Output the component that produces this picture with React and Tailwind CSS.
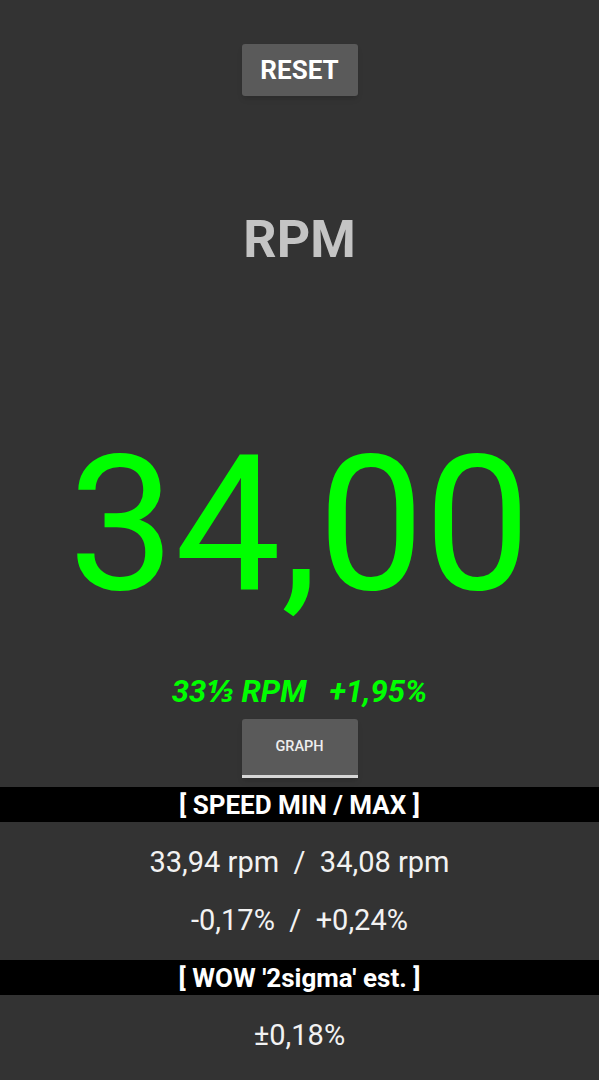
import React from "react";

const font = { fontFamily: "Roboto, 'Noto Sans', sans-serif" };

const SectionBar = ({ title }) => (
  <div className="w-full h-[35px] bg-black flex items-center justify-center">
    <span className="text-[26px] font-bold text-white leading-none whitespace-pre">{title}</span>
  </div>
);

const App = () => {
  return (
    <div className="min-h-screen w-full bg-[#333333] flex flex-col items-center" style={font}>
      <button className="mt-[44px] h-[52px] w-[116px] rounded-[3px] bg-[#5a5a5a] text-white text-[26px] font-bold shadow-md">
        RESET
      </button>

      <div className="mt-[118px] h-[52px] text-[52px] leading-none font-bold text-[#c4c4c4]">RPM</div>

      <div className="mt-[164px] h-[189px] text-[189px] leading-none text-[#00ff00]">34,00</div>

      <div className="mt-[57px] h-[31px] text-[31px] leading-none font-bold italic text-[#00ff00] whitespace-pre">
        33⅓ RPM   +1,95%
      </div>

      <button className="mt-[12px] h-[59px] w-[116px] rounded-t-[3px] bg-[#5a5a5a] border-b-[3px] border-[#d6d6d6] text-[14.5px] font-medium text-[#eeeeee] shadow-md">
        GRAPH
      </button>

      <div className="mt-[9px] w-full">
        <SectionBar title="[ SPEED MIN / MAX ]" />
      </div>

      <div className="mt-[26px] h-[29px] text-[29px] leading-none text-[#f2f2f2] whitespace-pre">33,94 rpm  /  34,08 rpm</div>
      <div className="mt-[29px] h-[29px] text-[29px] leading-none text-[#f2f2f2] whitespace-pre">-0,17%  /  +0,24%</div>

      <div className="mt-[25px] w-full">
        <SectionBar title="[ WOW '2sigma' est. ]" />
      </div>

      <div className="mt-[26px] h-[29px] text-[29px] leading-none text-[#f2f2f2]">±0,18%</div>
    </div>
  );
};

export default App;
